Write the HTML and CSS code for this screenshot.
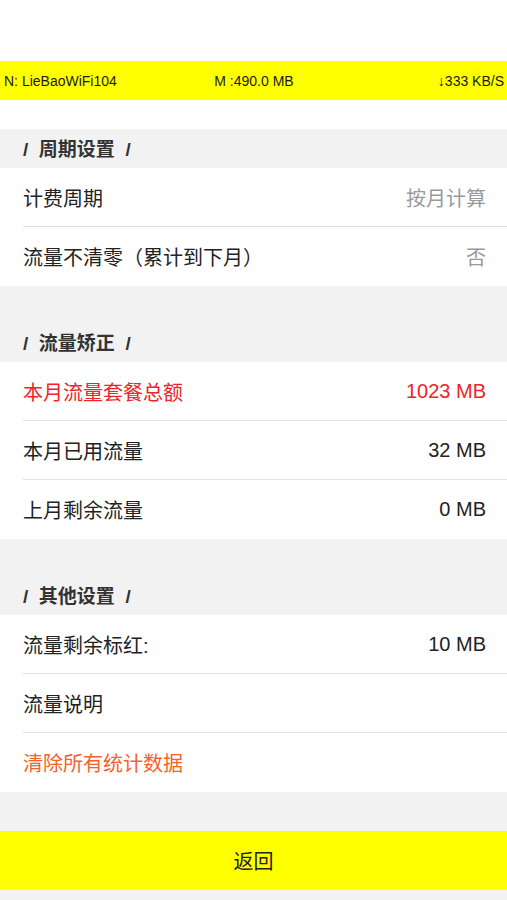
FILE: index.html
```html
<!DOCTYPE html>
<html lang="zh-CN">
<head>
    <meta charset="UTF-8" />
    <meta name="viewport" content="width=device-width, initial-scale=1.0"/>
    <title>流量设置</title>
    <link rel="stylesheet" href="styles.css">
</head>
<body>

    <div class="top-space"></div>

    <div class="status-bar">
        <span class="status-left">N: LieBaoWiFi104</span>
        <span class="status-mid">M :490.0 MB</span>
        <span class="status-right">↓333 KB/S</span>
    </div>

    <div class="white-gap"></div>

    <div class="section-title">/&nbsp; 周期设置 &nbsp;/</div>
    <div class="group">
        <div class="row">
            <span class="label">计费周期</span>
            <span class="value muted">按月计算</span>
        </div>
        <div class="row">
            <span class="label">流量不清零（累计到下月）</span>
            <span class="value muted">否</span>
        </div>
    </div>

    <div class="gap"></div>

    <div class="section-title">/&nbsp; 流量矫正 &nbsp;/</div>
    <div class="group">
        <div class="row red">
            <span class="label">本月流量套餐总额</span>
            <span class="value">1023 MB</span>
        </div>
        <div class="row">
            <span class="label">本月已用流量</span>
            <span class="value">32 MB</span>
        </div>
        <div class="row">
            <span class="label">上月剩余流量</span>
            <span class="value">0 MB</span>
        </div>
    </div>

    <div class="gap"></div>

    <div class="section-title">/&nbsp; 其他设置 &nbsp;/</div>
    <div class="group">
        <div class="row">
            <span class="label">流量剩余标红:</span>
            <span class="value">10 MB</span>
        </div>
        <div class="row">
            <span class="label">流量说明</span>
        </div>
        <div class="row orange">
            <span class="label">清除所有统计数据</span>
        </div>
    </div>

    <div class="bottom-gap"></div>

    <button class="back-button">返回</button>

</body>
</html>
```

FILE: styles.css
```css
body {
    font-family: "Liberation Sans", "Noto Sans CJK SC", sans-serif;
    background: #f2f2f2;
    margin: 0;
    padding: 0;
    color: #222;
}

.top-space {
    height: 61px;
    background-color: #fff;
}

.status-bar {
    background-color: #ffff00;
    height: 39px;
    display: grid;
    grid-template-columns: 1fr auto 1fr;
    align-items: center;
    padding: 0 3px 0 4px;
    font-size: 14px;
    color: #1a1a1a;
}

.status-mid {
    text-align: center;
}

.status-right {
    text-align: right;
}

.white-gap {
    height: 29px;
    background-color: #fff;
}

.section-title {
    height: 39px;
    line-height: 42px;
    padding-left: 23px;
    font-size: 19px;
    font-weight: bold;
    color: #333;
}

.group {
    background-color: #fff;
}

.row {
    height: 59px;
    box-sizing: border-box;
    margin-left: 23px;
    padding-right: 21px;
    display: flex;
    align-items: center;
    justify-content: space-between;
    font-size: 20px;
    border-bottom: 1px solid #e2e2e2;
}

.row:last-child {
    border-bottom: none;
}

.value.muted {
    color: #999;
}

.row.red {
    color: #f0222a;
}

.row.orange {
    color: #f5622d;
}

.gap {
    height: 37px;
}

.bottom-gap {
    height: 39px;
}

.back-button {
    display: block;
    width: 100%;
    height: 59px;
    border: none;
    background-color: #ffff00;
    font-family: inherit;
    font-size: 20px;
    color: #222;
    padding: 0;
}
```
